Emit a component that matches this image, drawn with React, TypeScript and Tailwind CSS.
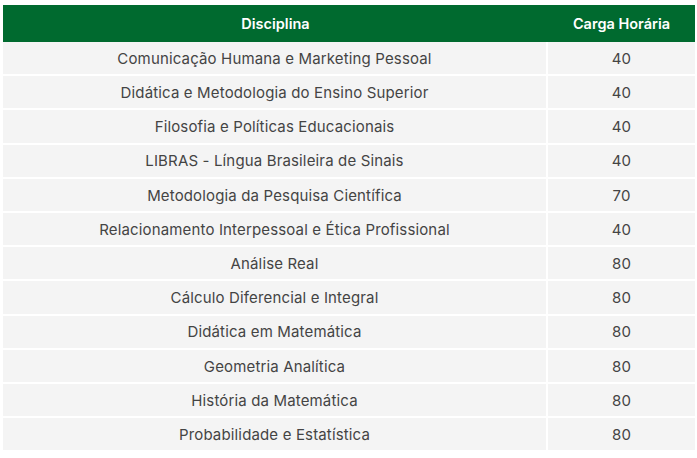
import React from "react";

const rows: [string, number][] = [
  ["Comunicação Humana e Marketing Pessoal", 40],
  ["Didática e Metodologia do Ensino Superior", 40],
  ["Filosofia e Políticas Educacionais", 40],
  ["LIBRAS - Língua Brasileira de Sinais", 40],
  ["Metodologia da Pesquisa Científica", 70],
  ["Relacionamento Interpessoal e Ética Profissional", 40],
  ["Análise Real", 80],
  ["Cálculo Diferencial e Integral", 80],
  ["Didática em Matemática", 80],
  ["Geometria Analítica", 80],
  ["História da Matemática", 80],
  ["Probabilidade e Estatística", 80],
];

export default function App() {
  return (
    <div className="min-h-screen bg-white pt-[5px] pl-[3px] pr-[2px] font-['Inter',sans-serif]">
      <div className="grid grid-cols-[545px_1fr] gap-y-[2px]">
        <div className="h-[37px] -mb-[2px] bg-[#006a2f] text-white text-[14.5px] font-semibold flex items-center justify-center">
          Disciplina
        </div>
        <div className="h-[37px] -mb-[2px] bg-[#006a2f] text-white text-[14.5px] font-semibold flex items-center justify-center">
          Carga Horária
        </div>
        {rows.map(([name, hours], i) => (
          <React.Fragment key={i}>
            <div className="h-[32.2px] pt-[2px] bg-[#f4f4f4] text-[#444] text-[15px] tracking-[0.01em] flex items-center justify-center border-r-2 border-white">
              {name}
            </div>
            <div className="h-[32.2px] pt-[2px] bg-[#f4f4f4] text-[#444] text-[15px] tracking-[0.01em] flex items-center justify-center">
              {hours}
            </div>
          </React.Fragment>
        ))}
      </div>
    </div>
  );
}
